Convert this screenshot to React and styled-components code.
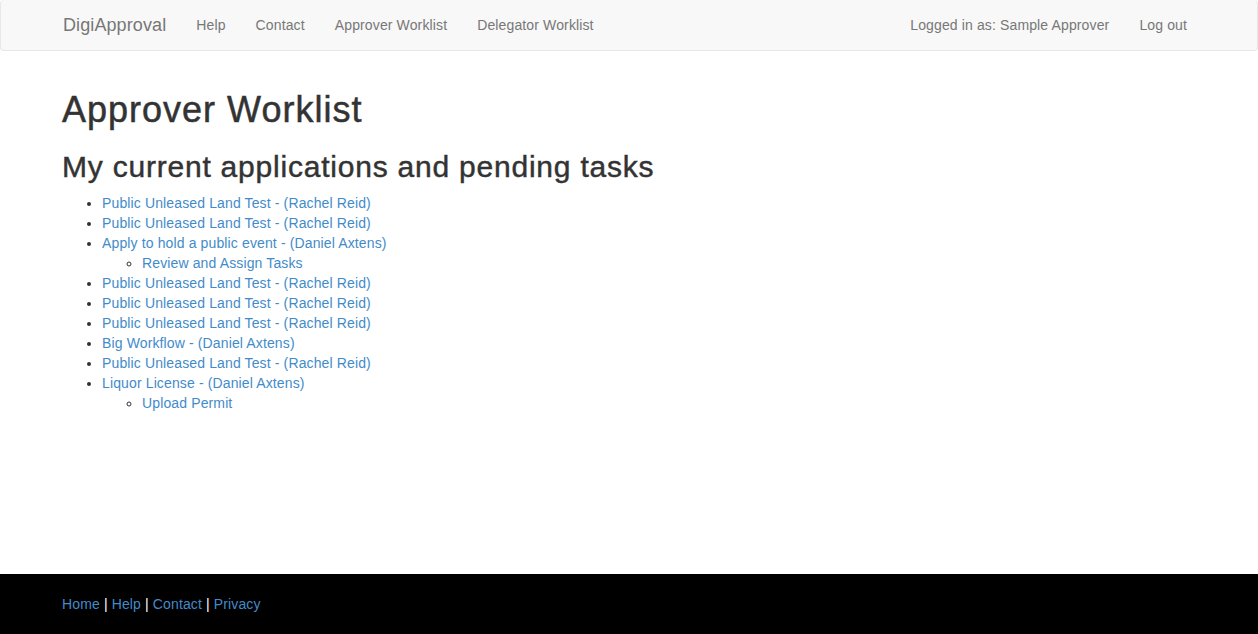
import React from 'react';
import styled, { createGlobalStyle } from 'styled-components';

const GlobalStyle = createGlobalStyle`
  html, body {
    margin: 0;
    padding: 0;
  }

  body {
    font-family: "Liberation Sans", Arial, Helvetica, sans-serif;
    font-size: 14px;
    line-height: 20px;
    letter-spacing: 0.13px;
    color: #333;
    background: #fff;
  }

  a {
    color: #428bca;
    text-decoration: none;
  }
`;

const Page = styled.div`
  display: flex;
  flex-direction: column;
  min-height: 100vh;
`;

/* Navbar */
const Navbar = styled.nav`
  display: flex;
  justify-content: space-between;
  align-items: center;
  box-sizing: border-box;
  height: 51px;
  padding: 0 55px 0 47px;
  border: 1px solid #e7e7e7;
  border-top: 0;
  border-radius: 4px;
  background: #f8f8f8;
`;

const NavGroup = styled.ul`
  display: flex;
  align-items: center;
  margin: 0;
  padding: 0;
  list-style: none;
`;

const Brand = styled.a`
  padding: 15px;
  font-size: 18px;
  line-height: 20px;
  letter-spacing: 0.1px;
  color: #777;
`;

const NavLink = styled.a`
  display: block;
  padding: 15px;
  font-size: 14px;
  line-height: 20px;
  color: #777;
`;

/* Main */
const Main = styled.main`
  flex: 1;
  padding: 19px 62px 0;
`;

const Title = styled.h1`
  margin: 20px 0 10px;
  font-size: 36px;
  font-weight: 400;
  line-height: 1.1;
  letter-spacing: 1px;
  -webkit-text-stroke: 0.5px #333;
`;

const Subtitle = styled.h2`
  margin: 20px 0 10px;
  font-size: 30px;
  font-weight: 400;
  line-height: 1.1;
  letter-spacing: 0.78px;
  -webkit-text-stroke: 0.45px #333;
`;

const TaskList = styled.ul`
  margin: 0 0 ${(props) => (props.nested ? '0' : '10px')};
  padding-left: 40px;
  list-style: ${(props) => (props.nested ? 'circle' : 'disc')};
`;

/* Footer */
const Footer = styled.footer`
  display: flex;
  align-items: center;
  height: 60px;
  padding: 0 62px;
  background: #000;
  color: #fff;
`;

const tasks = [
  { title: 'Public Unleased Land Test - (Rachel Reid)' },
  { title: 'Public Unleased Land Test - (Rachel Reid)' },
  {
    title: 'Apply to hold a public event - (Daniel Axtens)',
    sub: ['Review and Assign Tasks'],
  },
  { title: 'Public Unleased Land Test - (Rachel Reid)' },
  { title: 'Public Unleased Land Test - (Rachel Reid)' },
  { title: 'Public Unleased Land Test - (Rachel Reid)' },
  { title: 'Big Workflow - (Daniel Axtens)' },
  { title: 'Public Unleased Land Test - (Rachel Reid)' },
  { title: 'Liquor License - (Daniel Axtens)', sub: ['Upload Permit'] },
];

const footerLinks = ['Home', 'Help', 'Contact', 'Privacy'];

const App = () => (
  <Page>
    <GlobalStyle />
    <Navbar>
      <NavGroup>
        <li>
          <Brand href="#">DigiApproval</Brand>
        </li>
        {['Help', 'Contact', 'Approver Worklist', 'Delegator Worklist'].map((v) => (
          <li key={v}>
            <NavLink href="#">{v}</NavLink>
          </li>
        ))}
      </NavGroup>
      <NavGroup>
        <li>
          <NavLink href="#">Logged in as: Sample Approver</NavLink>
        </li>
        <li>
          <NavLink href="#">Log out</NavLink>
        </li>
      </NavGroup>
    </Navbar>

    <Main>
      <Title>Approver Worklist</Title>
      <Subtitle>My current applications and pending tasks</Subtitle>
      <TaskList>
        {tasks.map((t, i) => (
          <li key={i}>
            <a href="#">{t.title}</a>
            {t.sub && (
              <TaskList nested>
                {t.sub.map((s) => (
                  <li key={s}>
                    <a href="#">{s}</a>
                  </li>
                ))}
              </TaskList>
            )}
          </li>
        ))}
      </TaskList>
    </Main>

    <Footer>
      <div>
        {footerLinks.map((v, i) => (
          <React.Fragment key={v}>
            {i > 0 && ' | '}
            <a href="#">{v}</a>
          </React.Fragment>
        ))}
      </div>
    </Footer>
  </Page>
);

export default App;
